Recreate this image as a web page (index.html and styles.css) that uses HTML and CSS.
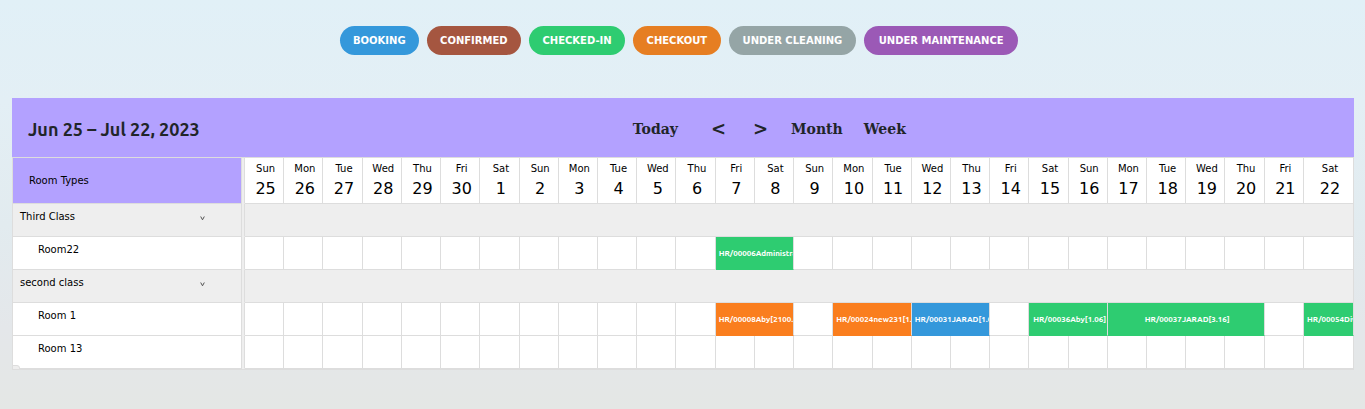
FILE: index.html
```html
<!DOCTYPE html>
<html lang="en">
<head>
<meta charset="utf-8">
<title>Room schedule</title>
<link rel="stylesheet" href="styles.css">
</head>
<body>
<ul class="legend">
  <li class="pill booking">BOOKING</li>
  <li class="pill confirmed">CONFIRMED</li>
  <li class="pill checkedin">CHECKED-IN</li>
  <li class="pill checkout">CHECKOUT</li>
  <li class="pill cleaning">UNDER CLEANING</li>
  <li class="pill maintenance">UNDER MAINTENANCE</li>
</ul>
<main class="calendar">
  <header class="toolbar">
    <h2 class="title">Jun 25 – Jul 22, 2023</h2>
    <nav class="controls">
      <button class="control today" type="button">Today</button>
      <button class="control arrow" type="button" aria-label="Previous">&lt;</button>
      <button class="control arrow" type="button" aria-label="Next">&gt;</button>
      <button class="control" type="button">Month</button>
      <button class="control" type="button">Week</button>
    </nav>
  </header>
  <table class="schedule">
    <colgroup><col class="col-room"><col class="col-split"><col span="27"><col class="col-last"></colgroup>
    <thead>
      <tr id="days"><th class="corner" scope="col">Room Types</th><td class="split"></td></tr>
    </thead>
    <tbody id="rows"></tbody>
  </table>
  <span class="corner-tab"></span>
</main>
<script src="schedule.js"></script>
</body>
</html>
```
FILE: styles.css
```css
* { box-sizing: border-box; }
body {
  margin: 0;
  padding: 26px 11px 39px 12px;
  min-height: 100vh;
  font-family: "DejaVu Sans", sans-serif;
  font-size: 10px;
  color: #000;
  background: linear-gradient(180deg, #e1f0f7 0%, #e3eff5 25%, #e2ebef 55%, #e4e7ea 80%, #e4e7e5 100%);
}
.legend {
  display: flex;
  gap: 8px;
  max-width: 686px;
  margin: 0 auto 43px;
  padding: 0 8px 0 0;
  list-style: none;
}
.pill {
  flex: 3 1 auto;
  padding: 0 12px;
  border-radius: 15px;
  color: #fff;
  font-weight: 700;
  line-height: 29px;
  text-align: center;
  white-space: nowrap;
}
.booking { flex-grow: 2; background: #3498db; }
.confirmed { background: #a55640; }
.checkedin { background: #2ecc71; }
.checkout { background: #e67e22; }
.cleaning { flex-grow: 4; background: #95a5a6; }
.maintenance { flex-grow: 5; background: #9b59b6; }
.calendar { position: relative; }
.toolbar {
  display: flex;
  align-items: center;
  height: 59px;
  padding: 2px 16px 0;
  background: #b3a1ff;
}
.title {
  flex: 0 0 45.4%;
  margin: 0;
  color: #212529;
  font: 600 18px/24px Ubuntu, "Noto Sans", sans-serif;
}
.controls { display: flex; align-items: center; }
.control {
  padding: 0 11px 0 10px;
  border: 0;
  background: none;
  color: #212529;
  font: 700 14px/20px "DejaVu Serif", serif;
}
.today { padding-right: 19px; }
.arrow { padding: 0 13px 0 14px; font-size: 18px; }
.schedule {
  width: 100%;
  table-layout: fixed;
  border-collapse: separate;
  border-spacing: 0;
  border: solid #ddd;
  border-width: 1px 0 1px 1px;
  background: #fff;
}
.col-room { width: 229px; }
.col-split { width: 3px; }
.col-last { width: 50px; }
th, td {
  padding: 0;
  border: solid #ddd;
  border-width: 0 1px 1px 0;
  font-weight: 400;
}
.schedule .corner {
  height: 46px;
  padding-left: 16px;
  background: #b3a1ff;
  text-align: left;
}
.schedule .split { border-bottom-color: #eee; background: #eee; }
.day { padding-left: 3px; text-align: center; }
.weekday { display: block; line-height: 14px; }
.date { display: block; margin-top: 3px; font-size: 16px; line-height: 20px; }
.schedule .name {
  height: 33px;
  padding: 6px 0 0 25px;
  line-height: 13px;
  text-align: left;
  vertical-align: top;
}
.group, .group .name { background: #eee; }
.schedule .group .name { padding-left: 7px; }
.group-label { display: flex; justify-content: space-between; padding-right: 36px; }
.toggle {
  padding: 3px 0 0;
  border: 0;
  background: none;
  color: #555;
  line-height: 0;
}
.event {
  color: #fff;
  font: 700 8px/30px Ubuntu, "Noto Sans", sans-serif;
  text-align: center;
  white-space: nowrap;
}
.event-label { display: block; overflow: hidden; padding: 2px 0 0 3px; }
.event.in { background: #2ecc71; border-bottom-color: #2ecc71; }
.event.out { background: #fa7e1e; border-bottom-color: #fa7e1e; }
.event.booked { background: #3498db; border-bottom-color: #3498db; }
.corner-tab {
  position: absolute;
  left: 0;
  bottom: 0;
  width: 8px;
  height: 5px;
  border: 1px solid #ddd;
  border-radius: 0 3px 0 0;
  background: #eee;
}
```
FILE: schedule.js
```js
const weekdays = ["Sun", "Mon", "Tue", "Wed", "Thu", "Fri", "Sat"];
const dayCount = 28;
const rows = [
  { name: "Third Class", group: true },
  { name: "Room22", events: [{ start: 12, span: 2, kind: "in", text: "HR/00006Administrator" }] },
  { name: "second class", group: true },
  { name: "Room 1", events: [
    { start: 12, span: 2, kind: "out", text: "HR/00008Aby[2100.0]" },
    { start: 15, span: 2, kind: "out", text: "HR/00024new231[1.06]" },
    { start: 17, span: 2, kind: "booked", text: "HR/00031JARAD[1.06]" },
    { start: 20, span: 2, kind: "in", text: "HR/00036Aby[1.06]" },
    { start: 22, span: 4, kind: "in", text: "HR/00037JARAD[3.16]" },
    { start: 27, span: 1, kind: "in", text: "HR/00054Divya" }
  ] },
  { name: "Room 13", events: [] }
];

let days = "";
for (let i = 0; i < dayCount; i++) {
  const date = i < 6 ? 25 + i : i - 5;
  days += `<th class="day" scope="col"><span class="weekday">${weekdays[i % 7]}</span><span class="date">${date}</span></th>`;
}
document.getElementById("days").insertAdjacentHTML("beforeend", days);

const chevron = '<svg width="5" height="5" viewBox="0 0 5 5"><path d="M.7 .5 2.5 3.8 4.3 .5" fill="none" stroke="currentColor"/></svg>';
document.getElementById("rows").innerHTML = rows.map(row => {
  if (row.group) {
    return `<tr class="group"><th class="name" scope="row"><span class="group-label">${row.name}<button class="toggle" type="button" aria-label="Collapse ${row.name}">${chevron}</button></span></th><td class="split"></td><td colspan="${dayCount}"></td></tr>`;
  }
  let cells = "";
  for (let i = 0; i < dayCount;) {
    const event = row.events.find(e => e.start === i);
    cells += event ? `<td class="event ${event.kind}" colspan="${event.span}"><span class="event-label">${event.text}</span></td>` : "<td></td>";
    i += event ? event.span : 1;
  }
  return `<tr><th class="name" scope="row">${row.name}</th><td class="split"></td>${cells}</tr>`;
}).join("");
```
